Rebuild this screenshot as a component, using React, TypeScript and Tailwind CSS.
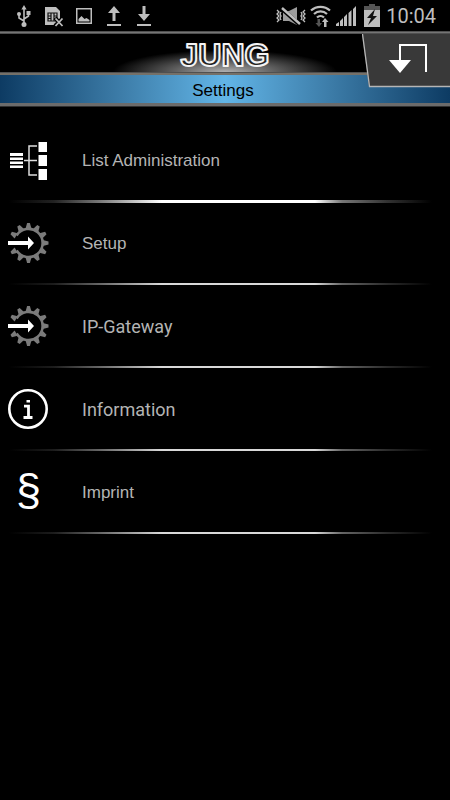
import type { ReactNode } from 'react';
import clsx from 'clsx';

type MenuItem = {
  label: string;
  icon: ReactNode;
  font: string;
};

const teeth = [0, 30, 60, 90, 120, 150, 210, 240, 270, 300, 330];

function UsbIcon() {
  return (
    <svg width="16" height="24" viewBox="0 0 16 24" fill="none" stroke="#bebebe" strokeWidth="1.6">
      <path d="M8 5v15M8 17l-5-3v-4M8 15l4.500-3V8" />
      <path d="M8 1l2.600 4.500H5.400z" fill="#bebebe" stroke="none" />
      <circle cx="8" cy="20.500" r="2.500" fill="#bebebe" stroke="none" />
      <circle cx="3" cy="10" r="2" fill="#bebebe" stroke="none" />
      <path d="M10.500 7h4v4h-4z" fill="#bebebe" stroke="none" />
    </svg>
  );
}

function SimIcon() {
  return (
    <svg width="20" height="24" viewBox="0 0 20 24">
      <path d="M1 3h11l4 4v14H1z" fill="#bebebe" />
      <path d="M4 9h9v8H4zM4 12h3M4 14.500h3M10 12h3M10 14.500h3M7 9v8M10 9v8" fill="none" stroke="#111" strokeWidth="1.200" />
      <path d="M11 14l8 8M19 14l-8 8" stroke="#000" strokeWidth="4" />
      <path d="M11.500 14.500l7 7.500M18.500 14.500l-7 7.500" stroke="#bebebe" strokeWidth="1.800" />
    </svg>
  );
}

function PictureIcon() {
  return (
    <svg width="16" height="16" viewBox="0 0 16 16">
      <path d="M.750.750h14.500v14.500H.750z" fill="none" stroke="#bebebe" strokeWidth="1.500" />
      <path d="M2.500 13.500V11l3-3 3 3 2-1 3 2v1.500z" fill="#bebebe" />
    </svg>
  );
}

function TransferIcon({ up }: { up?: boolean }) {
  return (
    <svg width="16" height="20" viewBox="0 0 16 20" fill="#bebebe">
      {up ? <path d="M8 0l6 7H9.500v8h-3V7H2z" /> : <path d="M8 15l6-7H9.500V0h-3v8H2z" />}
      <path d="M1 18h14v2H1z" />
    </svg>
  );
}

function MuteIcon() {
  return (
    <svg width="30" height="20" viewBox="0 0 30 20" fill="none" stroke="#bebebe">
      <path d="M7 5h6l8-4v18l-8-4H7z" fill="#9c9c9c" stroke="none" />
      <path d="M6 3l18 16" stroke="#000" strokeWidth="4" />
      <path d="M6 2l18 16" strokeWidth="2.400" />
      <path d="M1 4l2 2-2 2 2 2-2 2 2 2-2 2M5 6l-1 2 1 2-1 2 1 2M29 4l-2 2 2 2-2 2 2 2-2 2 2 2M25 6l1 2-1 2 1 2-1 2" strokeWidth="1.300" />
    </svg>
  );
}

function WifiIcon() {
  return (
    <svg width="22" height="22" viewBox="0 0 22 22" fill="none" stroke="#bebebe" strokeWidth="2.200">
      <path d="M1 5.500a14 14 0 0 1 19 0M4 9a9.500 9.500 0 0 1 13 0M7 12.500a5 5 0 0 1 7 0" />
      <path d="M7.500 14v4h-2l3.500 4 3-4h-2v-4z" fill="#555" stroke="none" />
      <path d="M14 22v-5h-2l3-4 3.500 4h-2v5z" fill="#bebebe" stroke="none" />
    </svg>
  );
}

function SignalIcon() {
  return (
    <svg width="20" height="20" viewBox="0 0 20 20" fill="#bebebe">
      <path d="M0 20v-2l3-2v4zM4 20v-5l3-3v8zM8 20v-9l3-3v12zM12.500 20V7l3-3v16zM17 20V3l3-3v20z" />
    </svg>
  );
}

function BatteryIcon() {
  return (
    <svg width="16" height="23" viewBox="0 0 16 23">
      <path d="M5 0h6v2h5v4H0V2h5z" fill="#555" />
      <path d="M0 6h16v17H0z" fill="#bebebe" />
      <path d="M11 5l-8 9h4l-3 7 9-9H9z" fill="#111" />
    </svg>
  );
}

function ListTreeIcon() {
  return (
    <svg width="40" height="40" viewBox="0 0 40 40" fill="#fff">
      <path d="M2 13h13v3H2zM2 17.500h13v2.500H2zM2 21.500h13v2.500H2zM2 25.500h13v2.500H2z" />
      <path d="M30.500 2H39v10h-8.500zM30.500 15H39v11h-8.500zM30.500 29H39v11h-8.500z" />
      <path d="M16 20.500h13M29 6h-8v29h8" fill="none" stroke="#ddd" strokeWidth="1.500" />
    </svg>
  );
}

function GearIcon() {
  return (
    <svg width="42" height="40" viewBox="0 0 42 40">
      <path d="M8.600 12.500A14.100 14.100 0 1 1 8.600 27.500" fill="none" stroke="#7b7b7b" strokeWidth="2.600" />
      {teeth.map((angle) => (
        <path key={angle} d="M34.800 17L40.500 18.600v2.800L34.800 23z" fill="#7b7b7b" transform={`rotate(${angle} 20.500 20)`} />
      ))}
      <path d="M0 18h20v-4.500l6 6.500-6 6.500V22H0z" fill="#fff" />
    </svg>
  );
}

function InfoIcon() {
  return (
    <svg width="40" height="40" viewBox="0 0 40 40" fill="none" stroke="#fff">
      <circle cx="20" cy="20" r="18.700" strokeWidth="2.600" />
      <path d="M16 17.200h4.500V28M15.500 28.500h9" strokeWidth="2.800" />
      <path d="M18.500 11h3.500v2.500h-3.500z" fill="#fff" stroke="none" />
    </svg>
  );
}

const items: MenuItem[] = [
  { label: 'List Administration', icon: <ListTreeIcon />, font: "font-['Liberation_Sans',sans-serif] text-[17px]" },
  { label: 'Setup', icon: <GearIcon />, font: "font-['Liberation_Sans',sans-serif] text-[17px]" },
  { label: 'IP-Gateway', icon: <GearIcon />, font: 'font-[Roboto,sans-serif] text-lg' },
  { label: 'Information', icon: <InfoIcon />, font: 'font-[Roboto,sans-serif] text-lg' },
  {
    label: 'Imprint',
    icon: (
      <span aria-hidden="true" className="pb-1 pl-2 font-['Liberation_Sans',sans-serif] text-[45px] leading-10 text-white">
        §
      </span>
    ),
    font: "font-['Liberation_Sans',sans-serif] text-[17px]",
  },
];

function StatusBar() {
  return (
    <div className="flex h-[31px] items-center justify-between pr-3.5 pl-4">
      <div className="flex items-center gap-3">
        <UsbIcon />
        <SimIcon />
        <PictureIcon />
        <div className="flex gap-3.5 pl-0.5">
          <TransferIcon up />
          <TransferIcon />
        </div>
      </div>
      <div className="flex items-center gap-1">
        <MuteIcon />
        <WifiIcon />
        <SignalIcon />
        <div className="pr-0.5 pl-1">
          <BatteryIcon />
        </div>
        <span className="font-[Roboto,sans-serif] text-[20px] leading-6 text-[#bebebe]">10:04</span>
      </div>
    </div>
  );
}

function Header() {
  return (
    <header className="relative">
      <div className="h-[3px] border-y border-[#505050] bg-[#757575]" />
      <div className="flex h-[38px] items-center justify-center bg-[radial-gradient(112px_22px_at_50%_100%,#b0b0b0,#606060_45%,#000)]">
        <svg width="110" height="38" viewBox="0 0 110 38" role="img" aria-label="JUNG">
          <text
            x="55"
            y="32"
            textAnchor="middle"
            className="fill-[#222] stroke-[#f4f4f4] font-['Liberation_Sans',sans-serif] text-[32px] font-bold"
            strokeWidth="2"
            strokeLinejoin="round"
          >
            JUNG
          </text>
        </svg>
      </div>
      <div className="h-[3px] border-t border-[#505050] bg-[#757068]" />
      <div className="flex h-7 items-center justify-center bg-[linear-gradient(90deg,#0d3b63,#3d7da9_27%,#62b5e7_50%,#3d7da9_73%,#0d3b63)]">
        <h1 className="pt-1 pr-1 font-['Liberation_Sans',sans-serif] text-[17px] leading-5 text-black">Settings</h1>
      </div>
      <div className="h-1 border-b border-[#303030] bg-[#6b6b6b]" />

      <button type="button" aria-label="Back" className="absolute top-[3px] right-0 cursor-pointer">
        <svg width="88" height="54" viewBox="0 0 88 54">
          <path d="M0 0h88v53H7z" fill="#393939" />
          <path d="M.500 0L7.500 52.500H88" fill="none" stroke="#b5b5b5" strokeWidth="1.300" />
          <path d="M38 27V11h26v27" fill="none" stroke="#fff" strokeWidth="2" />
          <path d="M27 26h22L38 39z" fill="#fff" />
        </svg>
      </button>
    </header>
  );
}

export default function App() {
  return (
    <div className="min-h-screen bg-black">
      <StatusBar />
      <Header />
      <nav className="pt-[13px]">
        <ul>
          {items.map((item, index) => (
            <li key={item.label} className="h-[83px]">
              <button type="button" className="flex h-20 w-full cursor-pointer items-center gap-8 pl-2 text-left">
                <span className="flex h-10 w-[42px] shrink-0 items-center">{item.icon}</span>
                <span className={clsx('pt-0.5 leading-6 text-[#b4b4b4]', item.font)}>{item.label}</span>
              </button>
              <div
                className={clsx(
                  'bg-[linear-gradient(90deg,#000_2%,#222_12%,#777_22%,#fff_36%,#fff_70%,#777_76%,#333_86%,#000_96%)]',
                  index === 0 ? 'h-[3px]' : 'h-0.5 opacity-85'
                )}
              />
            </li>
          ))}
        </ul>
      </nav>
    </div>
  );
}
